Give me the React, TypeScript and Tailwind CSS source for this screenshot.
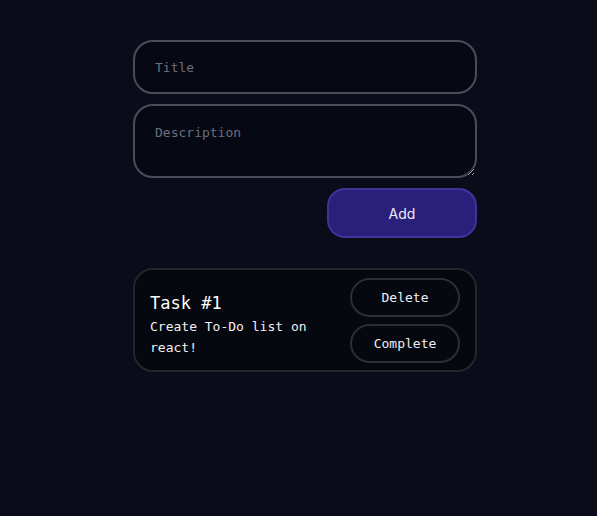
import { useState } from 'react'

interface Task {
  id: number
  title: string
  description: string
}

const mono = { fontFamily: '"DejaVu Sans Mono", "Liberation Mono", monospace' }

export default function App() {
  const [tasks] = useState<Task[]>([
    { id: 1, title: 'Task #1', description: 'Create To-Do list on react!' },
  ])

  return (
    <div className="flex min-h-[516px] w-full justify-center bg-[#0a0c19] pt-[40px] pl-[13px]" style={mono}>
      <div className="flex w-[344px] flex-col">
        {/* Form */}
        <input
          placeholder="Title"
          className="h-[54px] w-full rounded-[20px] border-2 border-[#4a4d57] bg-[#060913] px-[20px] text-[13px] text-white outline-none placeholder:text-[#6b6f7a]"
        />
        <textarea
          placeholder="Description"
          className="mt-[10px] h-[74px] w-full rounded-[20px] border-2 border-[#4a4d57] bg-[#060913] px-[20px] pt-[17px] text-[13px] text-white outline-none placeholder:text-[#6b6f7a]"
        />
        <div className="mt-[10px] flex justify-end">
          <button
            className="h-[50px] w-[150px] rounded-[18px] border-2 border-[#3f339a] bg-[#2b1f7c] text-[14px] text-[#ececf6]"
            style={{ fontFamily: 'Inter, "Noto Sans", sans-serif' }}
          >
            Add
          </button>
        </div>

        {/* Task list */}
        <div className="mt-[30px] flex flex-col gap-3">
          {tasks.map((task) => (
            <div
              key={task.id}
              className="flex items-center justify-between rounded-[20px] border-2 border-[#24262e] bg-[#060810] pt-[8px] pr-[15px] pb-[7px] pl-[15px]"
            >
              <div className="flex flex-col pt-[6px]">
                <h3 className="text-[17px] leading-[26px] text-white">{task.title}</h3>
                <p className="w-[175px] text-[13px] leading-[21px] text-[#f1f1f1]">{task.description}</p>
              </div>
              <div className="flex flex-col gap-[7px]">
                <button className="h-[39px] w-[110px] rounded-[20px] border-2 border-[#2c2e36] text-[13px] text-[#eef0f6]">
                  Delete
                </button>
                <button className="h-[39px] w-[110px] rounded-[20px] border-2 border-[#2c2e36] text-[13px] text-[#eef0f6]">
                  Complete
                </button>
              </div>
            </div>
          ))}
        </div>
      </div>
    </div>
  )
}
